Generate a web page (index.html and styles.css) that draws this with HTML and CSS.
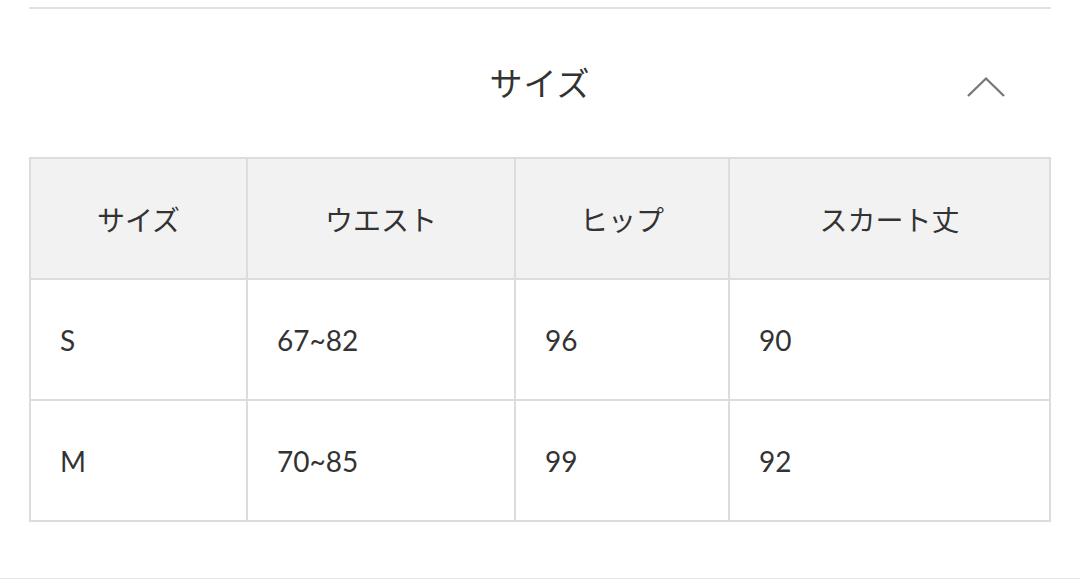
FILE: index.html
```html
<!DOCTYPE html>
<html lang="ja">
<head>
<meta charset="utf-8">
<title>サイズ</title>
<link rel="stylesheet" href="styles.css">
</head>
<body>
<div class="section">
  <div class="top-rule"></div>
  <div class="accordion-head">
    <span class="spacer"></span>
    <h2 class="title">サイズ</h2>
    <span class="chevron">
      <svg width="40" height="22" viewBox="0 0 40 22" fill="none" stroke="#777" stroke-width="2.3" stroke-linecap="butt"><polyline points="2,20 20,2.5 38,20"/></svg>
    </span>
  </div>
  <table class="size-table">
    <colgroup>
      <col class="c1"><col class="c2"><col class="c3"><col class="c4">
    </colgroup>
    <thead>
      <tr><th>サイズ</th><th>ウエスト</th><th>ヒップ</th><th>スカート丈</th></tr>
    </thead>
    <tbody>
      <tr><td>S</td><td>67~82</td><td>96</td><td>90</td></tr>
      <tr><td>M</td><td>70~85</td><td>99</td><td>92</td></tr>
    </tbody>
  </table>
</div>
<div class="bottom-rule"></div>
</body>
</html>
```
FILE: styles.css
```css
html, body {
  margin: 0;
  padding: 0;
  background: #fff;
}
body {
  font-family: "Lato", "Noto Sans CJK JP", sans-serif;
  color: #333;
  width: 1080px;
  height: 579px;
  overflow: hidden;
}
.section {
  padding: 0 29px;
}
.top-rule {
  margin-top: 7px;
  height: 2px;
  background: #e2e2e2;
}
.accordion-head {
  height: 148px;
  padding-bottom: 2px;
  box-sizing: border-box;
  display: grid;
  grid-template-columns: 1fr auto 1fr;
  align-items: center;
}
.title {
  margin: 0;
  font-family: "Noto Sans CJK JP", sans-serif;
  font-weight: 400;
  font-size: 33px;
  line-height: 1;
  color: #333;
  letter-spacing: 1px;
}
.chevron {
  justify-self: end;
  margin-right: 45px;
  margin-top: 9px;
  display: flex;
}
.size-table {
  table-layout: fixed;
  width: 1022px;
  border-spacing: 2px;
  background: #dcdcdc;
}
.c1 { width: 215px; }
.c2 { width: 266px; }
.c3 { width: 212px; }
.c4 { width: 319px; }
.size-table th,
.size-table td {
  padding: 0;
  height: 119px;
  font-size: 28px;
  font-weight: 400;
  color: #333;
}
.size-table th {
  background: #f2f2f2;
  text-align: center;
  font-family: "Noto Sans CJK JP", sans-serif;
  font-size: 28px;
}
.size-table td {
  background: #fff;
  text-align: left;
  padding-left: 29px;
}
.bottom-rule {
  margin-top: 56px;
  height: 1px;
  background: #e4e4e4;
}
```
